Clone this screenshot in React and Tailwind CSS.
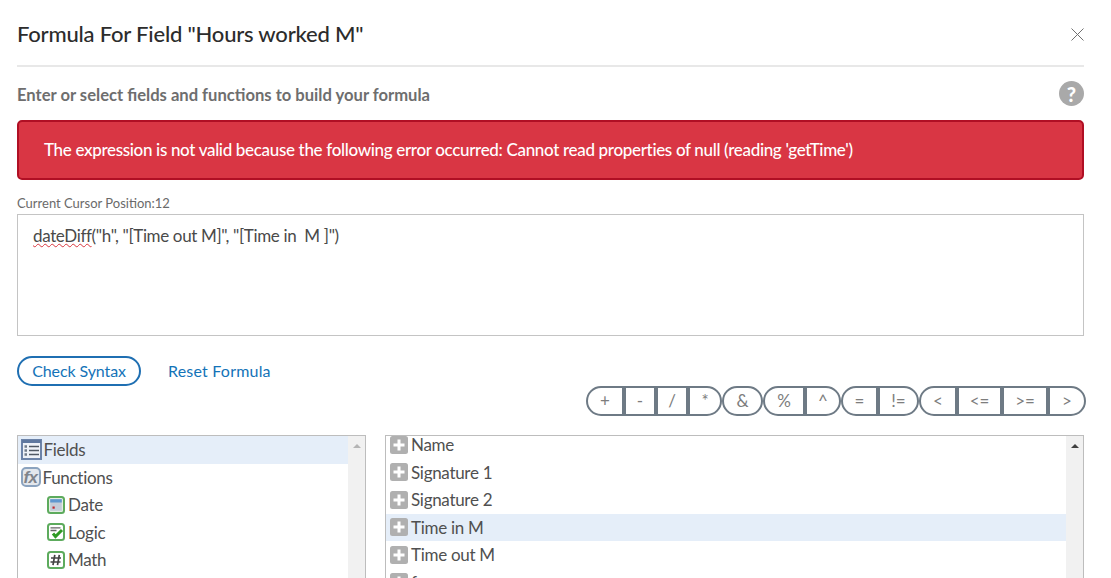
import React from "react";

function Plus() {
  return (
    <svg width="18" height="18" viewBox="0 0 18 18" className="shrink-0">
      <rect x="0" y="0" width="18" height="18" rx="2.5" fill="#b0b0b0" />
      <path d="M9 3.500v11M3.500 9h11" stroke="#fff" strokeWidth="3" />
    </svg>
  );
}

function FieldsIcon() {
  return (
    <svg width="21" height="21" viewBox="0 0 21 21" className="shrink-0">
      <rect x="1" y="1" width="19" height="19" fill="#eef2f8" stroke="#6c83a8" strokeWidth="2" />
      <rect x="1" y="1" width="19" height="3" fill="#5f789f" />
      <path d="M8 7.500h10M8 11.500h10M8 15.500h10" stroke="#4f5863" strokeWidth="1.600" />
      <path d="M3.500 7.500h2.500M3.500 11.500h2.500M3.500 15.500h2.500" stroke="#707b88" strokeWidth="2.400" />
    </svg>
  );
}

function FxIcon() {
  return (
    <div className="w-[20px] h-[20px] shrink-0 rounded-[5px] border-2 border-[#8ba3bf] bg-[#e3e7ec] flex items-center justify-center italic font-bold text-[17px] tracking-[-0.5px] leading-none text-[#7f848b] font-['Liberation_Sans',sans-serif]">
      fx
    </div>
  );
}

function DateIcon() {
  return (
    <svg width="18" height="18" viewBox="0 0 18 18" className="shrink-0">
      <rect x="1" y="1" width="16" height="16" rx="2.500" fill="#e4eee4" stroke="#5dab5d" strokeWidth="2" />
      <rect x="3.200" y="3.200" width="11.600" height="11.600" fill="#c3ccd9" />
      <rect x="3.200" y="3.200" width="11.600" height="3.300" fill="#5f97cf" />
      <rect x="5.500" y="10.500" width="2.200" height="2.200" fill="#c0272d" />
    </svg>
  );
}

function LogicIcon() {
  return (
    <svg width="18" height="18" viewBox="0 0 18 18" className="shrink-0">
      <rect x="1" y="1" width="16" height="16" rx="2.500" fill="#fff" stroke="#5dab5d" strokeWidth="2" />
      <path d="M3.500 4.800h10M3.500 7.500h6" stroke="#666" strokeWidth="1.300" />
      <path d="M6 10.500l2.500 3 6.500-6.500" fill="none" stroke="#2f9a24" strokeWidth="3" />
    </svg>
  );
}

function MathIcon() {
  return (
    <svg width="18" height="18" viewBox="0 0 18 18" className="shrink-0">
      <rect x="1" y="1" width="16" height="16" rx="2.500" fill="#fff" stroke="#5dab5d" strokeWidth="2" />
      <path d="M7.800 3.800L6 14.200M12.300 3.800L10.500 14.200M4 7h10M3.500 11h10" fill="none" stroke="#444" strokeWidth="1.700" />
    </svg>
  );
}

function Scrollbar({ w, arrow }) {
  return (
    <div className={`${w} shrink-0 bg-[#f1f1f1] flex justify-center pt-[8px]`}>
      <div className={`w-0 h-0 border-x-[4px] border-x-transparent border-b-[4px] ${arrow}`} />
    </div>
  );
}

const ops = [
  ["+", "w-[38px] rounded-l-full"],
  ["-", "w-[32px]"],
  ["/", "w-[32px]"],
  ["*", "w-[34px] rounded-r-full"],
  ["&", "w-[41px] rounded-full"],
  ["%", "w-[42px] rounded-l-full"],
  ["^", "w-[36px] rounded-r-full"],
  ["=", "w-[37px] rounded-l-full"],
  ["!=", "w-[41px] rounded-r-full"],
  ["<", "w-[38px] rounded-l-full"],
  ["<=", "w-[45px]"],
  [">=", "w-[46px]"],
  [">", "w-[38px] rounded-r-full"],
];

function LeftRow({ icon, label, indent, active }) {
  return (
    <div className={`h-[27.5px] flex items-center ${indent ? "pl-[29px] gap-[3px]" : "pl-[2.5px] gap-[2px]"} ${active ? "bg-[#e5eef9]" : ""}`}>
      {icon}
      <span>{label}</span>
    </div>
  );
}

function RightRow({ label, active }) {
  return (
    <div className={`h-[27.5px] flex items-center gap-[3px] pl-[4px] ${active ? "bg-[#e5eef9]" : ""}`}>
      <Plus />
      <span>{label}</span>
    </div>
  );
}

export default function App() {
  return (
    <div className="w-[1111px] h-[578px] overflow-hidden bg-white font-['Lato','Noto_Sans',sans-serif] text-[#505050]">
      <div className="ml-[17px] w-[1067px]">
        <div className="h-[65px] flex items-center justify-between">
          <h1 className="text-[22px] tracking-[-0.2px] text-[#2c2c2c] font-medium leading-none pt-[3px]">Formula For Field "Hours worked M"</h1>
          <svg width="13" height="13" viewBox="0 0 13 13" className="mt-[4px]">
            <path d="M.5.500l12 12M12.500.500l-12 12" stroke="#707070" strokeWidth="1" />
          </svg>
        </div>
        <div className="h-[2px] bg-[#e8e8e8]" />
        <div className="h-[53px] flex items-center justify-between">
          <span className="text-[16.6px] font-bold text-[#6e6e6e] pt-[3px]">Enter or select fields and functions to build your formula</span>
          <div className="w-[25px] h-[25px] rounded-full bg-[#a9a9a9] text-white font-black text-[20px] flex items-center justify-center">?</div>
        </div>
        <div className="h-[60px] rounded-[5px] border-2 border-[#b00f24] bg-[#d93644] text-white text-[17px] tracking-[-0.33px] font-medium flex items-center pl-[25px]">
          The expression is not valid because the following error occurred: Cannot read properties of null (reading 'getTime')
        </div>
        <div className="mt-[15px] h-[19px] text-[13px] leading-[17px] text-[#6a6a6a]">Current Cursor Position:12</div>
        <div className="h-[122px] border border-[#c4c4c4] pl-[15px] pt-[10px] text-[17px] tracking-[-0.35px] leading-[22px] text-[#4a4a4a] whitespace-pre">
          <span className="underline decoration-wavy decoration-[#d9363e] decoration-1">dateDiff</span>("h", "[Time out M]", "[Time in  M ]")
        </div>
        <div className="mt-[20px] h-[30px] flex items-center gap-[27px] text-[16px] text-[#1473b8]">
          <button className="h-[30px] w-[124px] rounded-full border-2 border-[#1f6fb2] text-[#1473b8] tracking-[-0.1px]">Check Syntax</button>
          <span className="tracking-[0.2px]">Reset Formula</span>
        </div>
        <div className="h-[30px] -mr-[2px] flex justify-end">
          {ops.map(([t, c]) => (
            <div key={t} className={`${c} h-[30px] border-2 border-[#6e7a85] flex items-center justify-center text-[17px] text-[#7d7d7d]`}>{t}</div>
          ))}
        </div>
        <div className="mt-[19px] flex text-[17px] tracking-[-0.3px] leading-none">
          <div className="w-[349px] h-[160px] border border-[#bdbdbd] flex">
            <div className="flex-1">
              <LeftRow active icon={<FieldsIcon />} label="Fields" />
              <LeftRow icon={<FxIcon />} label="Functions" />
              <LeftRow indent icon={<DateIcon />} label="Date" />
              <LeftRow indent icon={<LogicIcon />} label="Logic" />
              <LeftRow indent icon={<MathIcon />} label="Math" />
            </div>
            <Scrollbar w="w-[17px]" arrow="border-b-[#b5b5b5]" />
          </div>
          <div className="ml-[19px] flex-1 h-[160px] border border-[#bdbdbd] flex">
            <div className="flex-1 overflow-hidden">
              <div className="-mt-[5px]">
                <RightRow label="Name" />
                <RightRow label="Signature 1" />
                <RightRow label="Signature 2" />
                <RightRow active label="Time in M" />
                <RightRow label="Time out M" />
                <RightRow label="f" />
              </div>
            </div>
            <Scrollbar w="w-[17px]" arrow="border-b-[#404040]" />
          </div>
        </div>
      </div>
    </div>
  );
}
